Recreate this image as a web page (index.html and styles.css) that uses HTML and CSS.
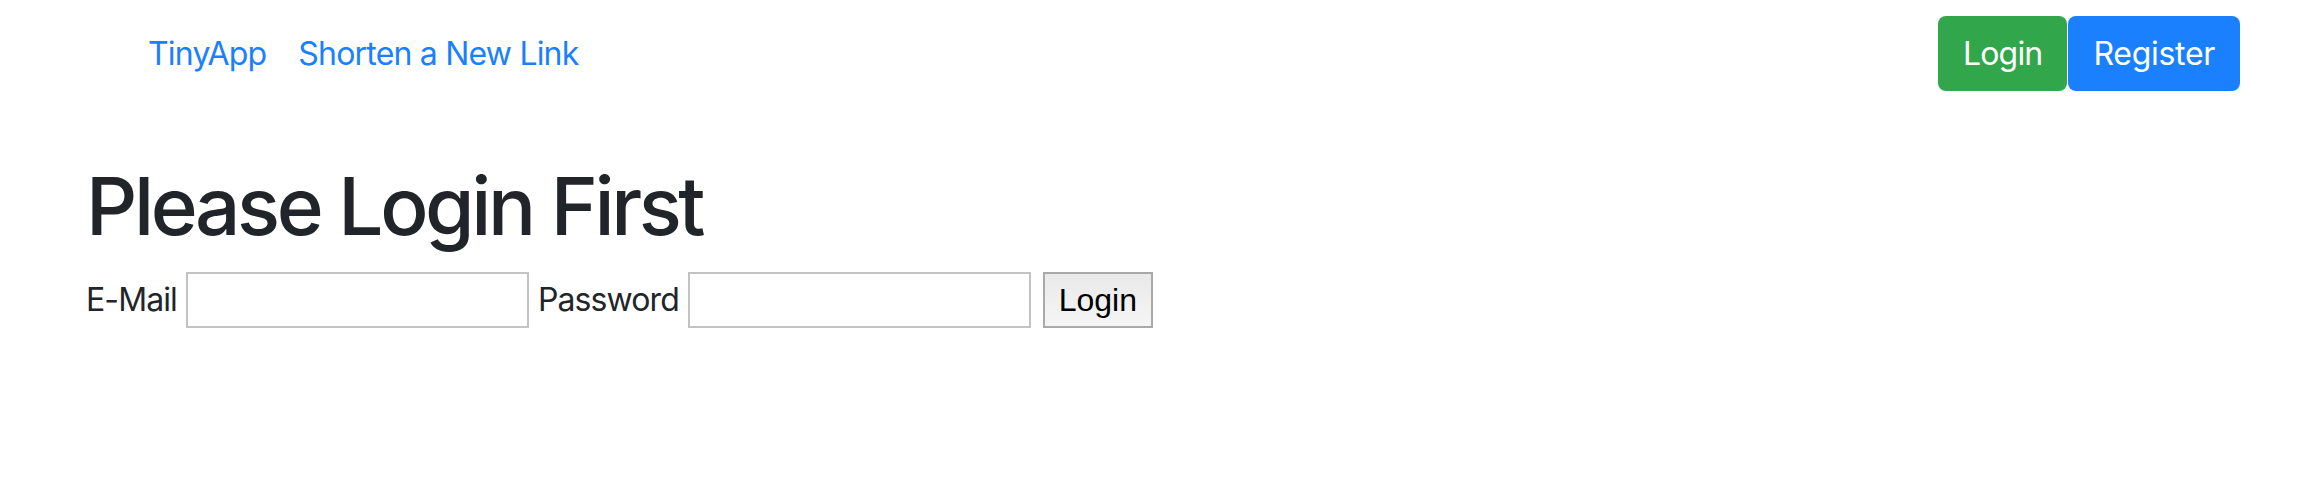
FILE: index.html
```html
<!DOCTYPE html>
<html lang="en">
<head>
<meta charset="utf-8">
<title>TinyApp</title>
<link rel="stylesheet" href="styles.css">
</head>
<body>
<nav class="navbar">
  <div class="nav-links">
    <a class="nav-link" href="#">TinyApp</a>
    <a class="nav-link" href="#">Shorten a New Link</a>
  </div>
  <div class="nav-actions">
    <a class="btn btn-success" href="#">Login</a>
    <a class="btn btn-primary" href="#">Register</a>
  </div>
</nav>
<main class="content">
  <h1 class="title">Please Login First</h1>
  <form class="login-form">
    <label class="field-label" for="email">E-Mail</label>
    <input class="field-input" id="email" type="text">
    <label class="field-label" for="password">Password</label>
    <input class="field-input" id="password" type="password">
    <button class="submit-btn" type="button">Login</button>
  </form>
</main>
</body>
</html>
```
FILE: styles.css
```css
* { box-sizing: border-box; }

html, body {
  margin: 0;
  padding: 0;
  background: #ffffff;
}

body {
  font-family: Inter, "Noto Sans", sans-serif;
  color: #212529;
}

.navbar {
  display: flex;
  justify-content: space-between;
  align-items: center;
  padding: 16px 72px 16px 132px;
}

.nav-links {
  display: flex;
  align-items: center;
}

.nav-link {
  display: block;
  padding: 0 16px;
  font-size: 32px;
  line-height: 48px;
  letter-spacing: -0.8px;
  color: #1a80fd;
  text-decoration: none;
}

.nav-actions {
  display: flex;
  gap: 1px;
}

.btn {
  display: block;
  height: 75px;
  line-height: 75px;
  padding: 0 25px;
  font-size: 32px;
  letter-spacing: -0.3px;
  color: #ffffff;
  text-decoration: none;
  border-radius: 8px;
}

.btn-success {
  background: #32a64b;
  letter-spacing: -0.8px;
}

.btn-primary { background: #1a80fd; }

.content {
  padding: 0 86px;
}

.title {
  margin: 51px 0 18px 0;
  font-size: 80px;
  font-weight: 500;
  line-height: 96px;
  letter-spacing: -3.4px;
  color: #212529;
}

.login-form {
  display: flex;
  align-items: center;
  gap: 9px;
}

.field-label {
  font-size: 32px;
  line-height: 48px;
  letter-spacing: -0.9px;
  color: #212529;
}

.field-input {
  width: 343px;
  height: 56px;
  border: 2px solid #c3c3c3;
  background: #ffffff;
  margin: 0;
}

.submit-btn {
  width: 110px;
  height: 56px;
  margin: 0 0 0 3px;
  border: 2px solid #a9a9a9;
  background: linear-gradient(#e9e9e9, #f5f5f5);
  font-family: "Liberation Sans", Arial, sans-serif;
  font-size: 32px;
  color: #000000;
  padding: 0;
}
```
